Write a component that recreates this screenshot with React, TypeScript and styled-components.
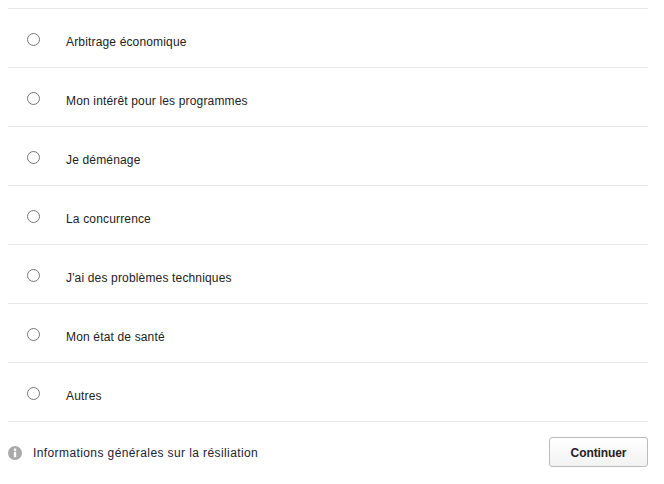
import React from 'react';
import styled, { createGlobalStyle } from 'styled-components';

const reasons = [
   'Arbitrage économique',
   'Mon intérêt pour les programmes',
   'Je déménage',
   'La concurrence',
   "J'ai des problèmes techniques",
   'Mon état de santé',
   'Autres',
];

const App = () => {
   return (
      <>
         <GlobalStyle />
         <Page>
            <ReasonList>
               {reasons.map((reason) => (
                  <ReasonRow key={reason}>
                     <Radio type="radio" name="reason" />
                     <ReasonLabel>{reason}</ReasonLabel>
                  </ReasonRow>
               ))}
            </ReasonList>
            <Footer>
               <InfoLink>
                  <svg width="14" height="14" viewBox="0 0 14 14">
                     <circle cx="7" cy="7" r="7" fill="#aaaaaa" />
                     <rect x="5.9" y="2.6" width="2.3" height="2.2" fill="#ffffff" />
                     <rect x="5.9" y="5.8" width="2.3" height="5.4" fill="#ffffff" />
                  </svg>
                  <span>Informations générales sur la résiliation</span>
               </InfoLink>
               <ContinueButton type="button">Continuer</ContinueButton>
            </Footer>
         </Page>
      </>
   );
};

export default App;

const GlobalStyle = createGlobalStyle`
   body {
      margin: 0;
      background: #ffffff;
      font-family: "Liberation Sans", Arial, sans-serif;
   }
`;
const Page = styled.div`
   width: 640px;
   padding: 8px 16px 0 8px;
`;
const ReasonList = styled.div`
   border-top: 1px solid #e8e8e8;
`;
const ReasonRow = styled.label`
   display: flex;
   align-items: center;
   height: 58px;
   border-bottom: 1px solid #e8e8e8;
`;
const Radio = styled.input`
   appearance: none;
   width: 13px;
   height: 13px;
   margin: 2px 0 0 19px;
   border: 1px solid #767676;
   border-radius: 50%;
   background: #ffffff;
   box-sizing: border-box;
`;
const ReasonLabel = styled.span`
   margin: 8px 0 0 26px;
   font-size: 12px;
   letter-spacing: 0.16px;
   color: #222222;
`;
const Footer = styled.div`
   display: flex;
   align-items: center;
   justify-content: space-between;
   padding-top: 15px;
`;
const InfoLink = styled.div`
   display: flex;
   align-items: center;
   gap: 11px;
   margin-top: 2px;
   font-size: 12px;
   letter-spacing: 0.4px;
   color: #222233;
`;
const ContinueButton = styled.button`
   width: 99px;
   height: 30px;
   padding: 2px 0 0;
   border: 1px solid #bbbbbb;
   border-radius: 3px;
   background: linear-gradient(#ffffff, #f2f2f2);
   font-family: "Liberation Sans", sans-serif;
   font-size: 12px;
   font-weight: 700;
   letter-spacing: -0.1px;
   color: #222222;
`;
